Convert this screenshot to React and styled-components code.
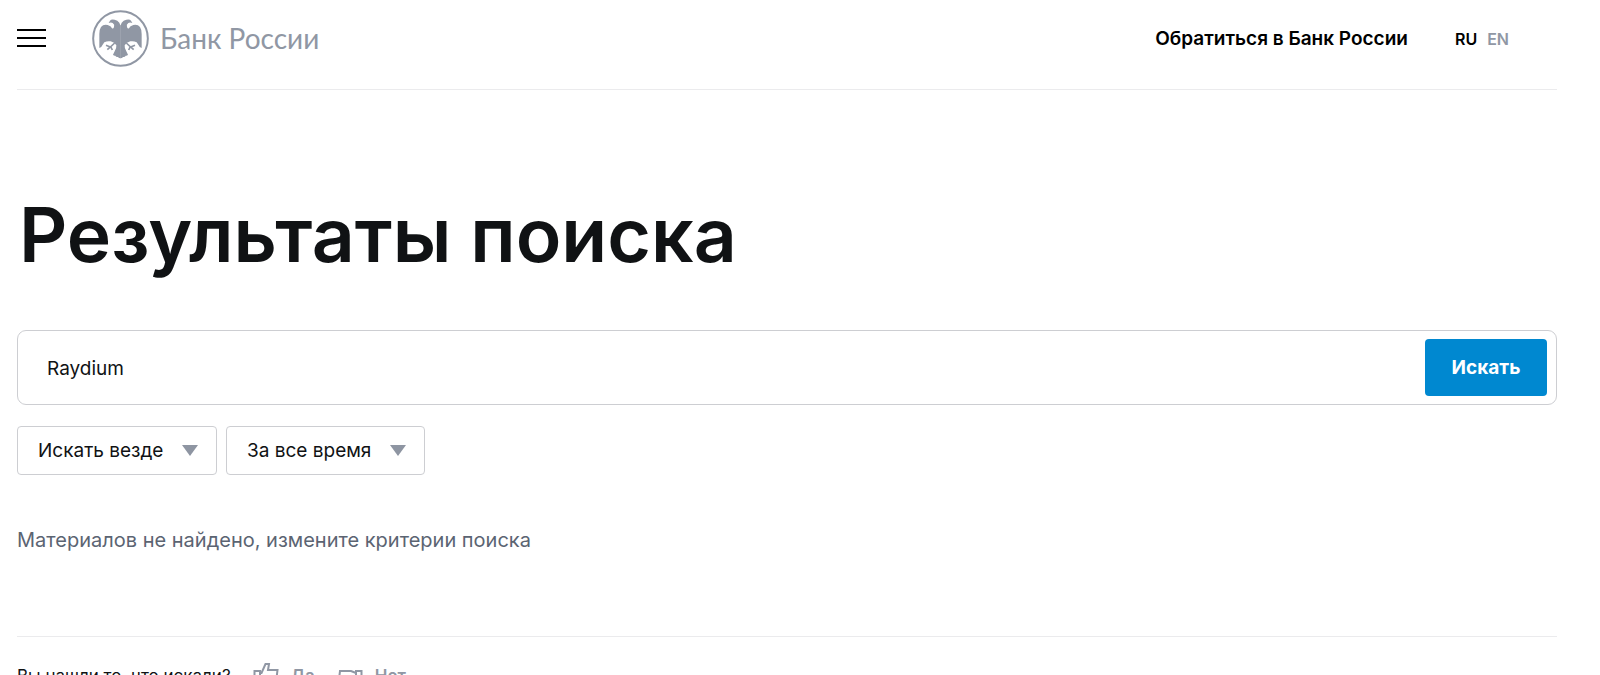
import React, { useState } from "react";
import styled, { createGlobalStyle } from "styled-components";

const EAGLE_HALF =
    "M86 46 H85 L82 38 Q77 30 68 29 Q57 27 54 32 L50 39 Q57 36 62 39 Q69 44 66 51 Q64 57 60 55 Q57 47 47 45 Q34 42 27 51 Q22 58 22 72 L22 114 Q29 113 31 106 Q34 102 37 97 Q46 92 56 94 Q68 97 73 106 Q74 116 68 124 L63 134 Q66 138 70 137 Q72 142 78 141 Q80 145 86 145 Z";

const App = () => {
    const [query, setQuery] = useState("Raydium");
    const [lang, setLang] = useState("ru");

    return (
        <Page>
            <GlobalStyle />
            <Header>
                <MenuButton type="button" aria-label="Меню">
                    <span />
                    <span />
                    <span />
                </MenuButton>
                <Logo href="#">
                    <Emblem />
                    Банк России
                </Logo>
                <HeaderNav>
                    <ContactLink href="#">Обратиться в Банк России</ContactLink>
                    <Langs>
                        <Lang type="button" $active={lang === "ru"} onClick={() => setLang("ru")}>RU</Lang>
                        <Lang type="button" $active={lang === "en"} onClick={() => setLang("en")}>EN</Lang>
                    </Langs>
                </HeaderNav>
            </Header>
            <main>
                <Title>Результаты поиска</Title>
                <form onSubmit={e => e.preventDefault()}>
                    <SearchBox>
                        <SearchInput
                            type="text"
                            aria-label="Поиск"
                            value={query}
                            onChange={e => setQuery(e.target.value)}
                        />
                        <SearchButton type="submit">Искать</SearchButton>
                    </SearchBox>
                    <Filters>
                        <Filter label="Раздел" options={["Искать везде"]} />
                        <Filter label="Период" options={["За все время"]} />
                    </Filters>
                </form>
                <Message>Материалов не найдено, измените критерии поиска</Message>
            </main>
            <Feedback>
                <Question>Вы нашли то, что искали?</Question>
                <Vote type="button">
                    <Thumb />
                    Да
                </Vote>
                <Vote type="button">
                    <Thumb down />
                    Нет
                </Vote>
            </Feedback>
        </Page>
    )
}

const Filter = ({ label, options }) => (
    <SelectWrap>
        <Select aria-label={label}>
            {options.map(option => <option key={option}>{option}</option>)}
        </Select>
        <Arrow viewBox="0 0 16 11" aria-hidden="true">
            <path d="M0 0h16L8 11z" />
        </Arrow>
    </SelectWrap>
)

const Emblem = () => (
    <svg width="57" height="57" viewBox="0 0 171 171" aria-hidden="true">
        <circle cx="85.5" cy="85.5" r="82" fill="none" stroke="currentColor" strokeWidth="6" />
        {["", "translate(171 0) scale(-1 1)"].map(transform => (
            <g key={transform} transform={transform}>
                <path d={EAGLE_HALF} fill="currentColor" />
                <path
                    d="M68 99 L55 111 L42 106 M56 110 L46 119 M56 110 L61 120"
                    fill="none"
                    stroke="currentColor"
                    strokeWidth="5"
                />
            </g>
        ))}
    </svg>
)

const Thumb = ({ down }) => (
    <svg width="26" height="28" viewBox="0 0 26 28" aria-hidden="true">
        <path
            transform={down ? "translate(26 29) rotate(180)" : undefined}
            d="M7 11 H8.500 L12.500 2 H16 L15 8 H24.500 L23 20 H12 L7 18 M7 9 V20 H1.500 V9 Z"
            fill="none"
            stroke="currentColor"
            strokeWidth="2"
        />
    </svg>
)

const GlobalStyle = createGlobalStyle`
    * {
        box-sizing: border-box;
    }
    body {
        margin: 0;
        background: #fff;
        color: #101214;
        font-family: Inter, "Noto Sans", sans-serif;
    }
    button, input, select {
        font-family: inherit;
        color: inherit;
    }
    button {
        padding: 0;
        border: 0;
        background: none;
        cursor: pointer;
    }
    a {
        color: inherit;
        text-decoration: none;
    }
`;

const Page = styled.div`
    padding: 0 43px 0 17px;
`;

const Header = styled.header`
    display: flex;
    align-items: center;
    height: 90px;
    padding: 0 48px 13px 0;
    border-bottom: 1px solid #ebebed;
`;

const MenuButton = styled.button`
    display: flex;
    flex-direction: column;
    gap: 6px;
    width: 29px;
    & span {
        height: 2px;
        background: #000;
    }
`;

const Logo = styled.a`
    display: flex;
    align-items: center;
    gap: 11px;
    margin-left: 46px;
    color: #9097a4;
    font-family: Lato, "Noto Sans", sans-serif;
    font-size: 28px;
    line-height: 32px;
`;

const HeaderNav = styled.nav`
    display: flex;
    align-items: center;
    margin-left: auto;
    padding-top: 2px;
`;

const ContactLink = styled.a`
    color: #000;
    font-size: 19px;
    font-weight: 600;
    line-height: 24px;
`;

const Langs = styled.div`
    display: flex;
    gap: 10px;
    margin-left: 47px;
`;

const Lang = styled.button`
    && {
        color: ${props => props.$active ? "#000" : "#9097a4"};
    }
    font-size: 16px;
    font-weight: 600;
    line-height: 24px;
`;

const Title = styled.h1`
    margin: 97px 0 47px;
    padding-left: 2px;
    font-size: 75px;
    font-weight: 600;
    line-height: 96px;
`;

const SearchBox = styled.div`
    display: flex;
    padding: 8px 9px 8px 0;
    border: 1px solid #cdced2;
    border-radius: 9px;
`;

const SearchInput = styled.input`
    flex: 1;
    min-width: 0;
    padding: 2px 29px 0;
    border: 0;
    outline: 0;
    background: none;
    font-size: 19px;
`;

const SearchButton = styled.button`
    width: 122px;
    height: 57px;
    border-radius: 4px;
    background: #0088d0;
    && {
        color: #fff;
    }
    font-size: 19px;
    font-weight: 700;
`;

const Filters = styled.div`
    display: flex;
    gap: 9px;
    margin-top: 21px;
`;

const SelectWrap = styled.div`
    display: grid;
    align-items: center;
`;

const Select = styled.select`
    grid-area: 1 / 1;
    appearance: none;
    height: 49px;
    padding: 0 52px 0 20px;
    border: 1px solid #cdced2;
    border-radius: 4px;
    background: #fff;
    font-size: 19px;
`;

const Arrow = styled.svg`
    grid-area: 1 / 1;
    justify-self: end;
    width: 16px;
    height: 11px;
    margin-right: 19px;
    fill: #8e95a2;
    pointer-events: none;
`;

const Message = styled.p`
    margin: 53px 0 84px;
    color: #5b6472;
    font-size: 20px;
    line-height: 24px;
`;

const Feedback = styled.footer`
    display: flex;
    align-items: center;
    gap: 22px;
    padding: 25px 0;
    border-top: 1px solid #ebebed;
`;

const Question = styled.span`
    font-size: 17px;
    line-height: 26px;
`;

const Vote = styled.button`
    display: flex;
    align-items: center;
    gap: 12px;
    && {
        color: #9097a4;
    }
    font-size: 17px;
    font-weight: 600;
`;

export default App;
